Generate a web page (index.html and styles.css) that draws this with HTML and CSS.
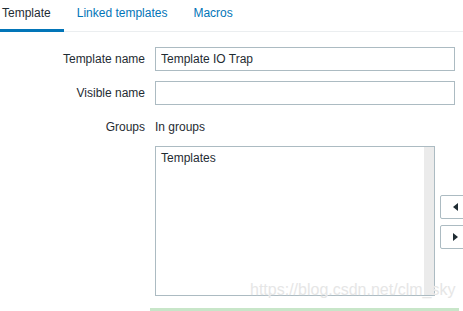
FILE: index.html
```html
<html>
<head>
  <title>Template</title>
  <link rel="stylesheet" href="styles.css">
</head>
<body>
<ul class="tabs">
  <li class="active"><a href="#">Template</a></li>
  <li><a href="#">Linked templates</a></li>
  <li><a href="#">Macros</a></li>
</ul>

<div class="form">
  <label class="label">Template name</label>
  <input type="text" class="field" value="Template IO Trap">

  <label class="label">Visible name</label>
  <input type="text" class="field" value="">

  <label class="label">Groups</label>
  <div class="groups">
    <div class="groups-head">In groups</div>
    <div class="groups-body">
      <div class="listbox">
        <div class="options">Templates</div>
        <div class="scroll"></div>
      </div>
      <div class="movers">
        <button type="button" class="mover"><span class="tri tri-left"></span></button>
        <button type="button" class="mover"><span class="tri tri-right"></span></button>
      </div>
    </div>
  </div>
</div>

<div class="footer-bar"></div>
<div class="watermark">https://blog.csdn.net/clm_sky</div>
</body>
</html>
```

FILE: styles.css
```css
html, body {
  background: #fff;
  color: #1f2c33;
  font: 12px Arial, "Liberation Sans", sans-serif;
  margin: 0;
  padding: 0;
  overflow: hidden;
}
body { position: relative; height: 311px; }

.tabs {
  list-style: none;
  margin: 0;
  padding: 0;
  display: flex;
  height: 31px;
  border-bottom: 1px solid #ebeef0;
}
.tabs li { height: 32px; }
.tabs li:first-child { margin-left: -11px; }
.tabs a {
  display: block;
  padding: 0 13px;
  line-height: 27px;
  color: #0275b8;
  text-decoration: none;
  box-sizing: border-box;
  height: 32px;
}
.tabs .active a {
  color: #1f2c33;
  border-bottom: 3px solid #0275b8;
}

.form {
  display: grid;
  grid-template-columns: 145px auto;
  column-gap: 10px;
  row-gap: 10px;
  padding-top: 15px;
  align-items: center;
}
.label { text-align: right; }
.form > .label:nth-of-type(3) { align-self: start; line-height: 24px; }

.field {
  box-sizing: border-box;
  height: 24px;
  width: 300px;
  margin: 0;
  border: 1px solid #acbbc2;
  padding: 0 5px;
  font: 12px Arial, "Liberation Sans", sans-serif;
  color: #1f2c33;
  outline: none;
}

.groups-head { line-height: 24px; margin-bottom: 7px; }
.groups-body { display: flex; align-items: center; }

.listbox {
  box-sizing: border-box;
  flex-shrink: 0;
  width: 280px;
  height: 150px;
  border: 1px solid #acbbc2;
  display: flex;
}
.options { flex: 1; padding: 3px 5px; line-height: 16px; }
.scroll { width: 10px; background: #ebebeb; }

.movers {
  display: flex;
  flex-direction: column;
  flex-shrink: 0;
  gap: 6px;
  margin-left: 5px;
  margin-top: 1px;
}
.mover {
  box-sizing: border-box;
  width: 30px;
  height: 24px;
  padding: 0;
  background: #fff;
  border: 1px solid #acbbc2;
  border-radius: 2px;
  display: flex;
  align-items: center;
  justify-content: center;
}
.tri { width: 0; height: 0; border-top: 4px solid transparent; border-bottom: 4px solid transparent; }
.tri-left { border-right: 5px solid #1f2c33; }
.tri-right { border-left: 5px solid #1f2c33; }

.footer-bar {
  margin: 12px 4px 0 150px;
  height: 3px;
  background: #c8e6c9;
}

.watermark {
  position: absolute;
  left: 250px;
  top: 281px;
  white-space: nowrap;
  font: 16px Arial, "Liberation Sans", sans-serif;
  color: #e6e6e6;
  text-shadow: 0 0 1px #fff;
}
```
